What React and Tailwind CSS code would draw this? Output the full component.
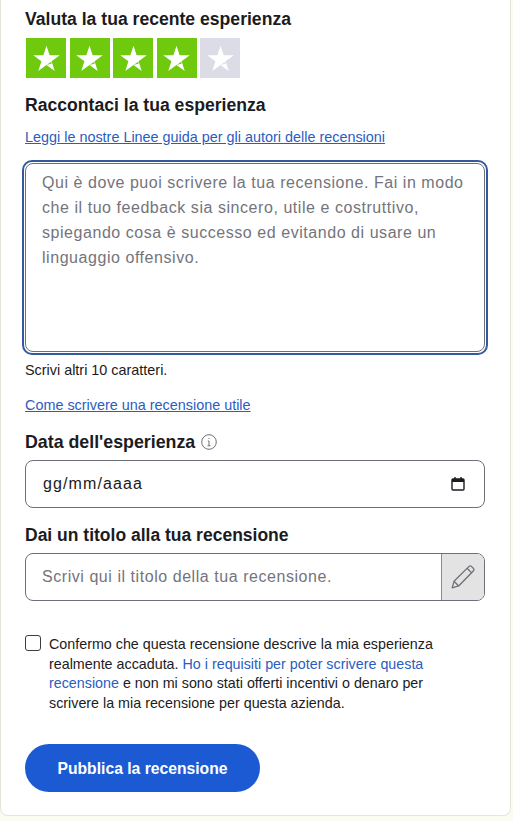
import React from "react";

const Star = ({ on }) => (
  <div className={`flex h-10 w-10 items-center justify-center ${on ? "bg-[#6fc90c]" : "bg-[#dcdce6]"}`}>
    <svg viewBox="0 0 24 24" className="h-[29px] w-[29px]">
      <path fill="#fff" d="M12 1.5l2.6 7.9H23l-6.8 4.9 2.6 8-6.8-4.9-6.8 4.9 2.6-8L1 9.4h8.4z" />
      <path fill={on ? "#6fc90c" : "#dcdce6"} d="M12 17.4l3.9-2.7.5 1.5z" />
    </svg>
  </div>
);

export default function App() {
  return (
    <div className="h-[821px] w-[513px] overflow-hidden bg-[#fcfbf3] font-['Liberation_Sans',Arial,sans-serif] text-[#1b1b21]">
      <div className="h-[816px] w-[511px] rounded-b-lg border-x border-b border-[#e5e5dd] bg-white pl-6 pr-[25px] pt-[9px]">
        <h2 className="text-[17.6px] leading-5 font-bold">Valuta la tua recente esperienza</h2>
        <div className="mt-[9px] ml-[1px] flex gap-[3.5px]">
          {[1, 1, 1, 1, 0].map((on, i) => (
            <Star key={i} on={!!on} />
          ))}
        </div>
        <h2 className="mt-[17px] text-[17.6px] leading-5 font-bold">Raccontaci la tua esperienza</h2>
        <a className="mt-[14px] block text-[14.4px] leading-4 text-[#2b5cbf] underline">
          Leggi le nostre Linee guida per gli autori delle recensioni
        </a>
        <div className="-mx-[3px] mt-[15px] h-[195px] w-[466px] rounded-[10px] border-2 border-[#33599f] p-[1px]">
          <div className="h-full rounded-lg border border-[#6f6f78] px-4 pt-[6px] text-base leading-[25px] tracking-[0.55px] text-[#74747c]">
            Qui è dove puoi scrivere la tua recensione. Fai in modo che il tuo feedback sia sincero, utile e costruttivo, spiegando cosa è successo ed evitando di usare un linguaggio offensivo.
          </div>
        </div>
        <p className="mt-[7px] text-[14.4px] leading-4">Scrivi altri 10 caratteri.</p>
        <a className="mt-[19px] block text-[14.4px] leading-4 text-[#2b5cbf] underline">
          Come scrivere una recensione utile
        </a>
        <div className="mt-[19px] flex h-5 items-center gap-[6px]">
          <h2 className="text-[17.8px] leading-5 font-bold">Data dell'esperienza</h2>
          <svg viewBox="0 0 16 16" className="h-4 w-4" fill="none" stroke="#6f6f78" strokeWidth="1">
            <circle cx="8" cy="8" r="7.3" />
            <path d="M8 7v4.8M6.8 7H8M6.6 11.8h2.8M8 4v1" />
          </svg>
        </div>
        <div className="mt-2 flex h-12 w-[460px] items-center justify-between rounded-lg border border-[#6f6f78] pr-[19px] pl-[17px] text-base tracking-[1.1px]">
          <span>gg/mm/aaaa</span>
          <svg viewBox="0 0 14 14" className="h-[14px] w-[14px]" fill="none" stroke="#1b1b21">
            <rect x="1" y="2" width="12" height="11" rx="1" strokeWidth="1.4" />
            <path d="M1 3.5h12" strokeWidth="3" />
            <path d="M4 0v2M10 0v2" strokeWidth="1.4" />
          </svg>
        </div>
        <h2 className="mt-[17px] text-[17.5px] leading-5 font-bold">Dai un titolo alla tua recensione</h2>
        <div className="mt-2 flex h-12 w-[460px] overflow-hidden rounded-lg border border-[#6f6f78]">
          <div className="flex flex-1 items-center pl-4 text-base tracking-[0.55px] text-[#74747c]">
            Scrivi qui il titolo della tua recensione.
          </div>
          <div className="flex w-[43px] items-center justify-center border-l border-[#8a8a90] bg-[#e3e3e3]">
            <svg viewBox="0 0 24 24" className="h-[26px] w-[26px]" fill="none" stroke="#6f6f78" strokeWidth="1.2" strokeLinejoin="round">
              <path d="M2 22l1.7-6L17.6 2.2a1.5 1.5 0 0 1 2.1 0l2 2a1.5 1.5 0 0 1 0 2.1L8 20.3z" />
              <path d="M3.7 16L8 20.3M15.8 4L20 8.2" />
            </svg>
          </div>
        </div>
        <div className="mt-[34px] flex gap-2">
          <div className="h-4 w-4 shrink-0 rounded-[3px] border border-[#3c3c42] bg-white" />
          <p className="w-[405px] text-[14.3px] leading-[19.6px]">
            Confermo che questa recensione descrive la mia esperienza realmente accaduta.{" "}
            <a className="text-[#2b5cbf]">Ho i requisiti per poter scrivere questa recensione</a> e non mi sono stati offerti incentivi o denaro per scrivere la mia recensione per questa azienda.
          </p>
        </div>
        <button className="mt-[31px] flex h-12 w-[235px] items-center justify-center rounded-full bg-[#1c5ad4] text-[15.7px] font-bold text-white">
          Pubblica la recensione
        </button>
      </div>
    </div>
  );
}
